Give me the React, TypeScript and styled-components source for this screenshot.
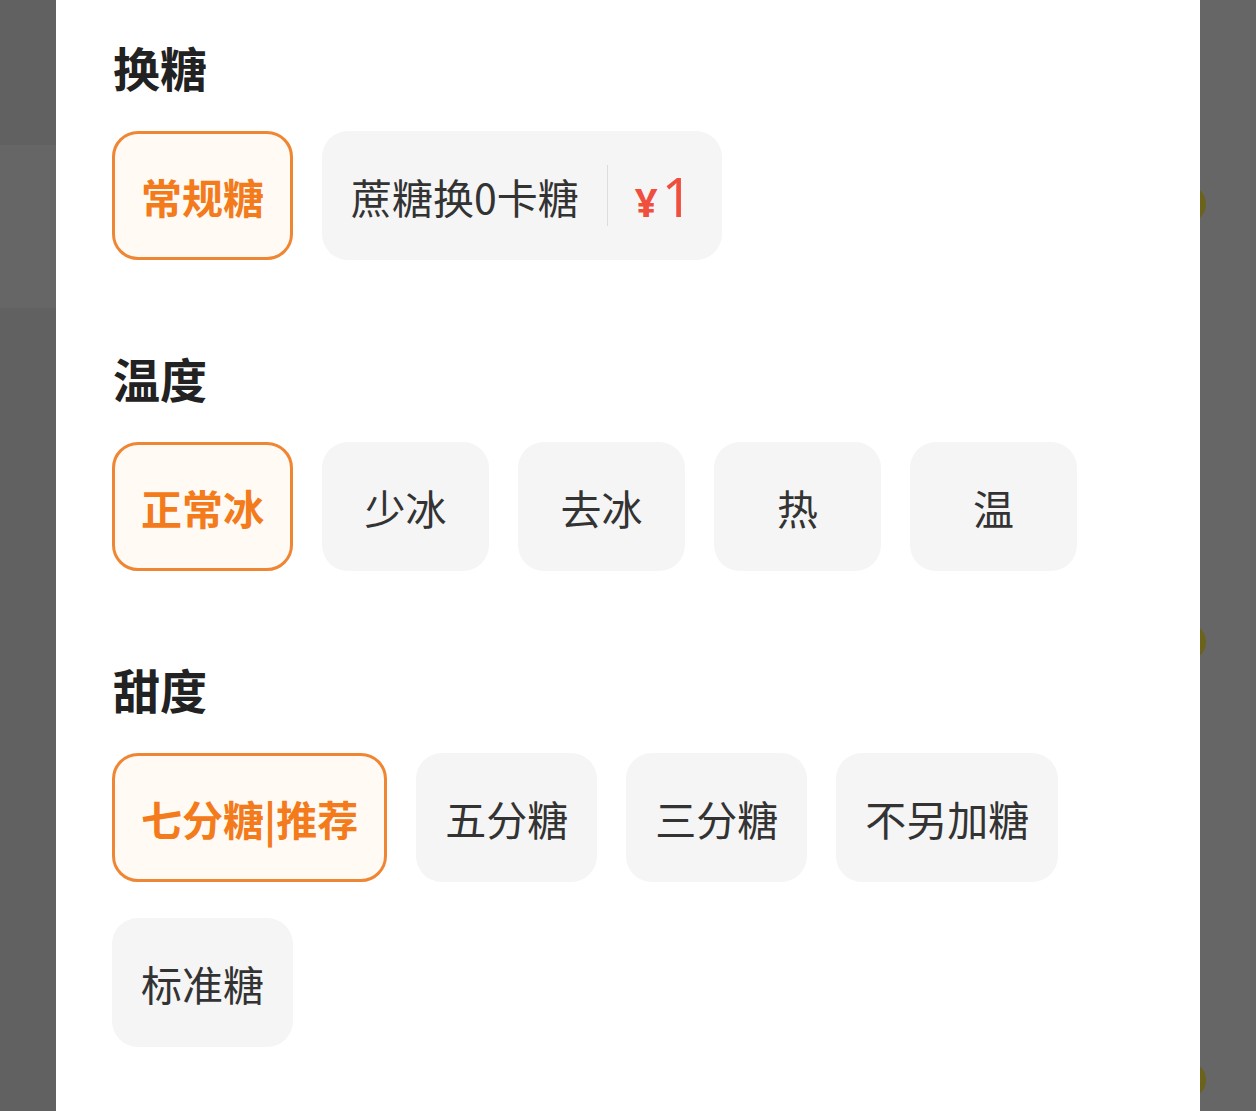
import React from 'react'
import styled, { createGlobalStyle } from 'styled-components'

const GlobalStyle = createGlobalStyle`
  html, body {
    margin: 0;
    padding: 0;
    background: #616161;
  }
  body {
    font-family: "Noto Sans CJK SC", "Noto Sans", sans-serif;
  }
`

type Option = { label: string; selected?: boolean; price?: string }

const sections: { title: string; options: Option[] }[] = [
  {
    title: '换糖',
    options: [{ label: '常规糖', selected: true }, { label: '蔗糖换0卡糖', price: '1' }],
  },
  {
    title: '温度',
    options: [
      { label: '正常冰', selected: true },
      { label: '少冰' },
      { label: '去冰' },
      { label: '热' },
      { label: '温' },
    ],
  },
  {
    title: '甜度',
    options: [
      { label: '七分糖|推荐', selected: true },
      { label: '五分糖' },
      { label: '三分糖' },
      { label: '不另加糖' },
      { label: '标准糖' },
    ],
  },
]

// dimmed page content peeking out behind the sheet
const bumps = [204, 642, 1080]

export default function App() {
  return (
    <Page>
      <GlobalStyle />
      <LeftStrip>
        <Band />
      </LeftStrip>
      <Panel>
        {sections.map((s) => (
          <Section key={s.title}>
            <Title>{s.title}</Title>
            <Options>
              {s.options.map((o) => (
                <Chip key={o.label} $selected={!!o.selected}>
                  {o.label}
                  {o.price && (
                    <>
                      <Divider />
                      <Price>
                        <Yen>¥</Yen>
                        {o.price}
                      </Price>
                    </>
                  )}
                </Chip>
              ))}
            </Options>
          </Section>
        ))}
      </Panel>
      <RightStrip>
        {bumps.map((y) => (
          <Bump key={y} style={{ top: y - 18 }} />
        ))}
      </RightStrip>
    </Page>
  )
}

const Page = styled.div`
  display: flex;
  width: 1256px;
  height: 1111px;
  overflow: hidden;
  background: #616161;
`

const LeftStrip = styled.div`
  width: 56px;
  flex-shrink: 0;
  padding-top: 145px;
`

const Band = styled.div`
  height: 163px;
  background: #666666;
`

const Panel = styled.div`
  position: relative;
  z-index: 1;
  width: 1144px;
  flex-shrink: 0;
  background: #ffffff;
  padding: 37px 56px 0;
  box-sizing: border-box;
  display: flex;
  flex-direction: column;
  gap: 88px;
`

const RightStrip = styled.div`
  position: relative;
  flex: 1;
  background: #666666;
`

const Bump = styled.div`
  position: absolute;
  left: -28px;
  width: 34px;
  height: 36px;
  border-radius: 50%;
  background: #6b621c;
`

const Section = styled.div`
  display: flex;
  flex-direction: column;
  gap: 34px;
`

const Title = styled.div`
  font-size: 47px;
  line-height: 60px;
  font-weight: 700;
  color: #222222;
  margin-left: 1px;
`

const Options = styled.div`
  display: flex;
  flex-wrap: wrap;
  column-gap: 29px;
  row-gap: 36px;
`

const Chip = styled.div<{ $selected: boolean }>`
  box-sizing: border-box;
  height: 129px;
  min-width: 167px;
  padding: 0 26px;
  display: inline-flex;
  align-items: center;
  justify-content: center;
  border-radius: 26px;
  border: 3px solid ${(p) => (p.$selected ? '#ef8633' : 'transparent')};
  background: ${(p) => (p.$selected ? '#fffaf4' : '#f5f5f5')};
  color: ${(p) => (p.$selected ? '#f47b1b' : '#333333')};
  font-size: 41px;
  font-weight: ${(p) => (p.$selected ? 700 : 400)};
  white-space: nowrap;
`

const Divider = styled.span`
  width: 1px;
  height: 61px;
  background: #dcdcdc;
  margin: 0 27px 0 28px;
`

const Price = styled.span`
  color: #ef4f3c;
  font-family: "Noto Sans", "Noto Sans CJK SC", sans-serif;
  font-size: 54px;
  line-height: 1;
  display: inline-flex;
  align-items: baseline;
`

const Yen = styled.span`
  font-size: 40px;
  font-weight: 700;
  margin-right: 4px;
`
